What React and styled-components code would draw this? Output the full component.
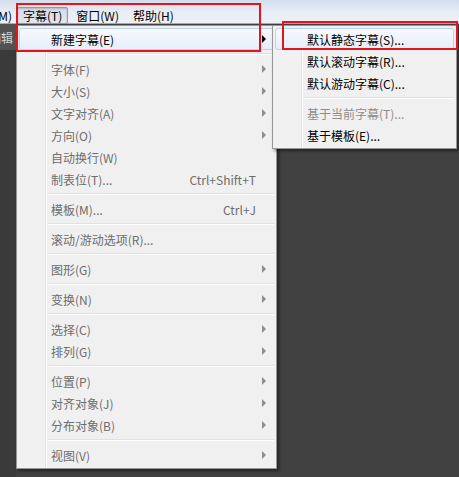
import React from "react";
import styled, { createGlobalStyle } from "styled-components";

const Global = createGlobalStyle`
  html, body { margin: 0; padding: 0; background: #414141; }
  body { font-family: "Noto Sans CJK SC", "Microsoft YaHei", sans-serif; }
`;

const FONT = `"Noto Sans CJK SC", "Noto Sans", sans-serif`;

const Window = styled.div`
  position: relative;
  width: 459px;
  height: 477px;
  overflow: hidden;
  display: flex;
  flex-direction: column;
  font-family: ${FONT};
  font-size: 12px;
`;

const MenuBar = styled.div`
  height: 24px;
  box-sizing: border-box;
  padding-top: 7px;
  display: flex;
  align-items: flex-start;
  gap: 2px;
  background: linear-gradient(#d2deee 0, #dce4f0 5px, #e8ecf5 12px, #eef1f6 100%);
  border-bottom: 1px solid #a3abb7;
`;

const CutItem = styled.div`
  width: 15px;
  height: 17px;
  box-sizing: border-box;
  padding-right: 3px;
  display: flex;
  align-items: center;
  justify-content: flex-end;
  overflow: hidden;
  white-space: nowrap;
  color: #000;
`;

const BarItem = styled.div`
  height: 17px;
  box-sizing: border-box;
  padding: 0 5px;
  display: flex;
  align-items: center;
  white-space: nowrap;
  color: #000;
  border: 1px solid ${(p) => (p.$pressed ? "#8e9aa9" : "transparent")};
  border-radius: 2px;
  background: ${(p) => (p.$pressed ? "linear-gradient(#d6dce6, #e2e6ed)" : "transparent")};
  box-shadow: ${(p) => (p.$pressed ? "inset 0 1px 2px rgba(0,0,0,0.18)" : "none")};
`;

const Workspace = styled.div`
  flex: 1;
  display: flex;
  background: #414141;
`;

const LeftStrip = styled.div`
  width: 16px;
  display: flex;
  flex-direction: column;
  background: #3a3a3a;
`;

const PanelTab = styled.div`
  height: 26px;
  box-sizing: border-box;
  padding-right: 3px;
  display: flex;
  align-items: center;
  justify-content: flex-end;
  overflow: hidden;
  white-space: nowrap;
  background: #525252;
  color: #d4d4d4;
`;

const Menu = styled.div`
  position: absolute;
  left: ${(p) => p.$left}px;
  top: ${(p) => p.$top}px;
  width: ${(p) => p.$width}px;
  box-sizing: border-box;
  padding: 2px;
  border: 1px solid #979797;
  background: linear-gradient(
    to right,
    #f1f1f1 0 28px,
    #e2e3e3 28px 29px,
    #ffffff 29px 30px,
    #f0f0f0 30px
  );
  box-shadow: 2px 2px 3px rgba(0, 0, 0, 0.45);
  z-index: ${(p) => p.$z};
`;

const Item = styled.div`
  height: 22px;
  box-sizing: border-box;
  padding-left: 31px;
  display: flex;
  align-items: center;
  border: 1px solid ${(p) => (p.$active ? "#bcd2ee" : "transparent")};
  border-radius: 3px;
  background: ${(p) => (p.$active ? "linear-gradient(#f7f9fd, #e6eef9)" : "transparent")};
  color: ${(p) => p.$color};
  white-space: nowrap;
`;

const Label = styled.span`
  flex: 1;
`;

const Shortcut = styled.span`
  color: inherit;
`;

const ArrowCell = styled.span`
  width: 17px;
  height: 100%;
  box-sizing: border-box;
  padding-left: 6px;
  display: flex;
  align-items: center;
`;

const Arrow = styled.span`
  width: 0;
  height: 0;
  border-left: 4px solid ${(p) => p.$color};
  border-top: 4px solid transparent;
  border-bottom: 4px solid transparent;
`;

const Separator = styled.div`
  height: 8px;
  box-sizing: border-box;
  padding-top: 3px;
  margin-left: 29px;
`;

const SepLine = styled.div`
  height: 1px;
  background: #e0e0e0;
  border-bottom: 1px solid #ffffff;
`;

const Annotation = styled.div`
  position: absolute;
  left: ${(p) => p.$left}px;
  top: ${(p) => p.$top}px;
  width: ${(p) => p.$width}px;
  height: ${(p) => p.$height}px;
  box-sizing: border-box;
  border: 2px solid #e3141c;
  pointer-events: none;
  z-index: 10;
`;

const GRAY = "#6d6d6d";
const ARROW_GRAY = "#8e8e8e";

const mainMenu = [
  { label: "新建字幕(E)", sub: true, active: true, color: "#000" },
  "sep",
  { label: "字体(F)", sub: true },
  { label: "大小(S)", sub: true },
  { label: "文字对齐(A)", sub: true },
  { label: "方向(O)", sub: true },
  { label: "自动换行(W)" },
  { label: "制表位(T)...", shortcut: "Ctrl+Shift+T" },
  "sep",
  { label: "模板(M)...", shortcut: "Ctrl+J" },
  "sep",
  { label: "滚动/游动选项(R)..." },
  "sep",
  { label: "图形(G)", sub: true },
  "sep",
  { label: "变换(N)", sub: true },
  "sep",
  { label: "选择(C)", sub: true },
  { label: "排列(G)", sub: true },
  "sep",
  { label: "位置(P)", sub: true },
  { label: "对齐对象(J)", sub: true },
  { label: "分布对象(B)", sub: true },
  "sep",
  { label: "视图(V)", sub: true },
];

const subMenu = [
  { label: "默认静态字幕(S)...", active: true, color: "#000" },
  { label: "默认滚动字幕(R)...", color: "#000" },
  { label: "默认游动字幕(C)...", color: "#000" },
  "sep",
  { label: "基于当前字幕(T)...", color: "#8d8d8d" },
  { label: "基于模板(E)...", color: "#000" },
];

function MenuList({ items, showArrows }) {
  return items.map((it, i) =>
    it === "sep" ? (
      <Separator key={i}>
        <SepLine />
      </Separator>
    ) : (
      <Item key={i} $active={it.active} $color={it.color || GRAY}>
        <Label>{it.label}</Label>
        {it.shortcut && <Shortcut>{it.shortcut}</Shortcut>}
        {showArrows ? (
          <ArrowCell>{it.sub && <Arrow $color={it.color === "#000" ? "#000" : ARROW_GRAY} />}</ArrowCell>
        ) : (
          <ArrowCell />
        )}
      </Item>
    )
  );
}

export default function App() {
  return (
    <Window>
      <Global />
      <MenuBar>
        <CutItem>(M)</CutItem>
        <BarItem $pressed>字幕(T)</BarItem>
        <BarItem>窗口(W)</BarItem>
        <BarItem>帮助(H)</BarItem>
      </MenuBar>
      <Workspace>
        <LeftStrip>
          <PanelTab>编辑</PanelTab>
        </LeftStrip>
      </Workspace>

      <Menu $left={16} $top={25} $width={261} $z={2}>
        <MenuList items={mainMenu} showArrows />
      </Menu>
      <Menu $left={272} $top={25} $width={185} $z={3}>
        <MenuList items={subMenu} />
      </Menu>

      <Annotation $left={16} $top={3} $width={245} $height={49} />
      <Annotation $left={282} $top={21} $width={176} $height={29} />
    </Window>
  );
}
